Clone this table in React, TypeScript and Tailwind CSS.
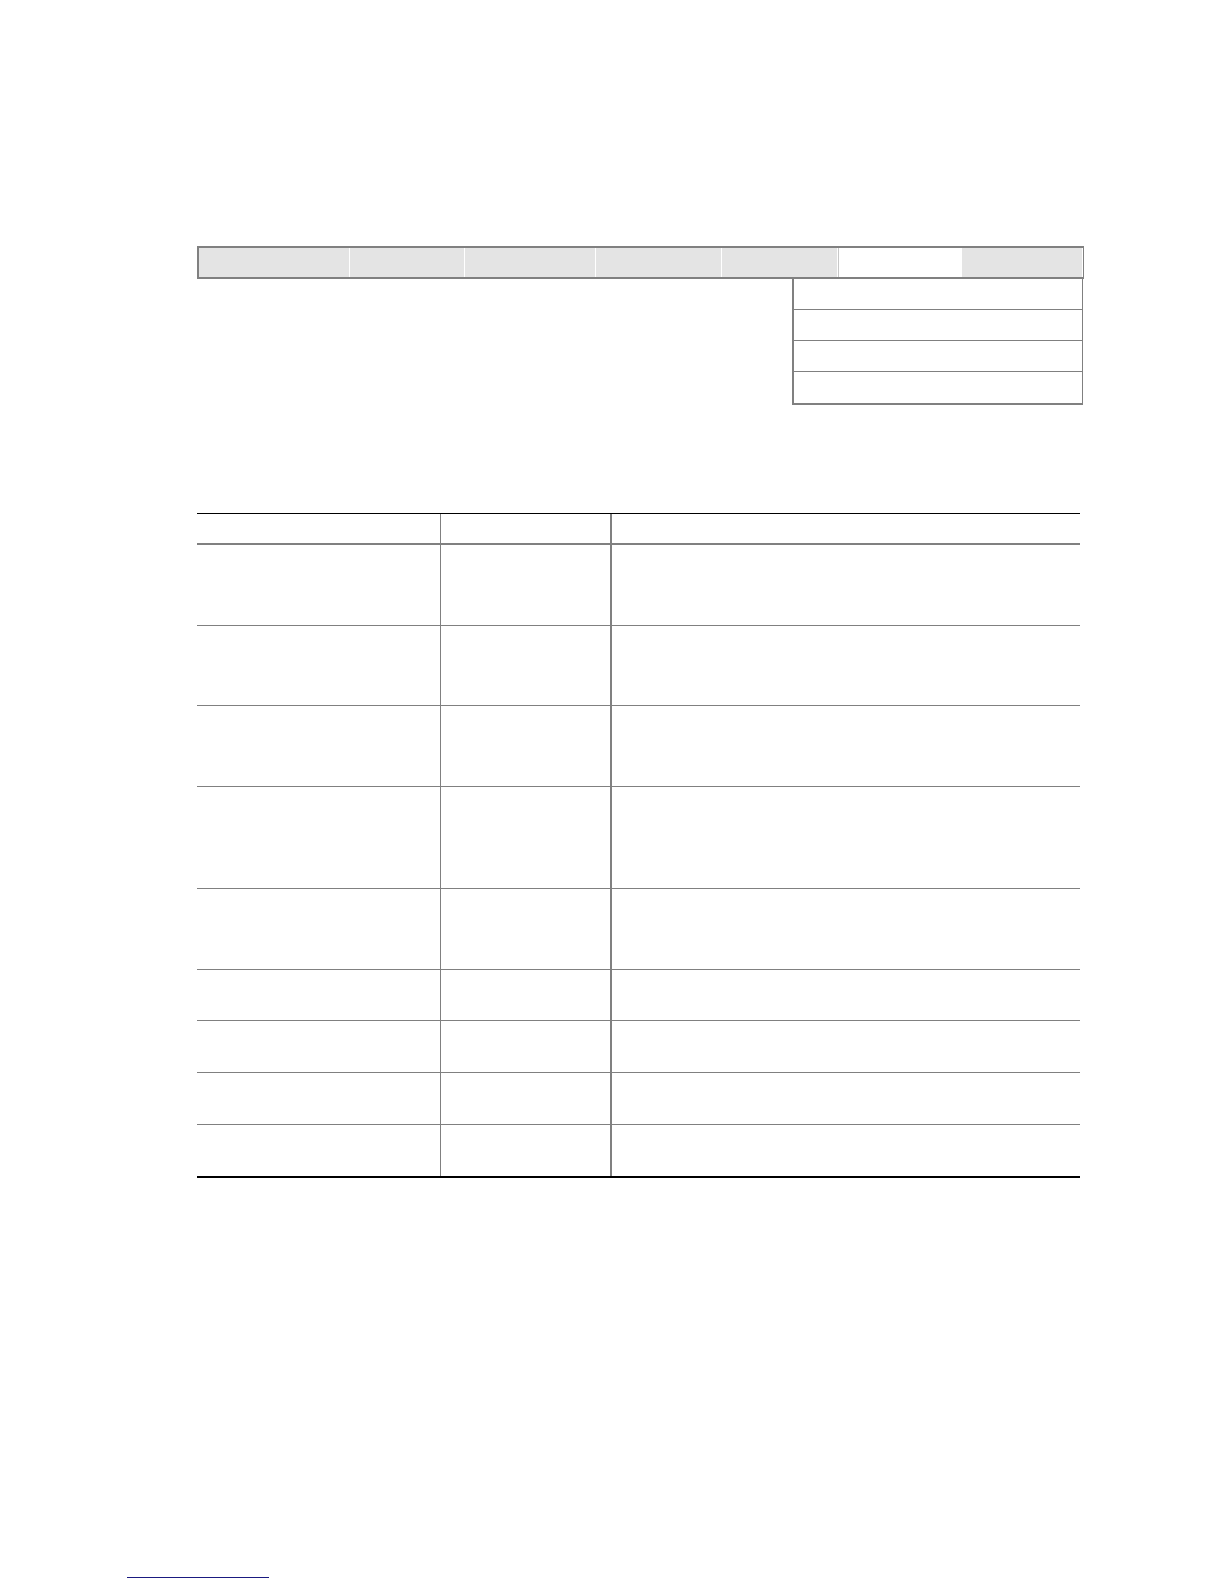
import React from "react";

const tabs = [
  { w: "w-[151px]", active: false },
  { w: "w-[115px]", active: false },
  { w: "w-[131px]", active: false },
  { w: "w-[127px]", active: false },
  { w: "w-[116px]", active: false },
  { w: "w-[124px]", active: true },
  { w: "w-[121px]", active: false },
];

const rows = [
  "h-[81px]",
  "h-[80px]",
  "h-[81px]",
  "h-[102px]",
  "h-[81px]",
  "h-[51px]",
  "h-[52px]",
  "h-[52px]",
  "h-[51px]",
];

export default function App() {
  return (
    <div className="min-h-[1584px] bg-white pt-[246px] pl-[197px] font-['Liberation_Sans',sans-serif]">
      {/* Menu bar */}
      <div className="flex h-[33px] w-[887px] border-y-2 border-l-2 border-r border-[#808080]">
        {tabs.map((t, i) => (
          <div
            key={i}
            className={`${t.w} h-full border-r border-white ${
              t.active ? "bg-white border-l border-l-[#c8c8c8]" : "bg-[#e4e4e4]"
            }`}
          />
        ))}
      </div>

      {/* Dropdown */}
      <div className="ml-[595px] w-[291px] border-l-2 border-r border-b-2 border-[#808080]">
        {[0, 1, 2, 3].map((i) => (
          <div
            key={i}
            className={`h-[31px] bg-white ${i < 3 ? "border-b border-[#808080]" : ""}`}
          />
        ))}
      </div>

      {/* Table */}
      <div className="mt-[108px] w-[883px] border-t border-b-2 border-black">
        <div className="grid h-[31px] grid-cols-[244px_171px_468px] border-b-2 border-[#808080]">
          <div className="border-r border-[#808080]" />
          <div className="border-r-2 border-[#808080]" />
          <div />
        </div>
        {rows.map((h, i) => (
          <div
            key={i}
            className={`grid ${h} grid-cols-[244px_171px_468px] ${
              i < rows.length - 1 ? "border-b border-[#808080]" : ""
            }`}
          >
            <div className="border-r border-[#808080]" />
            <div className="border-r-2 border-[#808080]" />
            <div />
          </div>
        ))}
      </div>

      {/* Footer link */}
      <div className="mt-[399px] -ml-[70px]">
        <a href="#" className="block h-[1px] w-[142px] border-b border-[#1a1a80]" />
      </div>
    </div>
  );
}
